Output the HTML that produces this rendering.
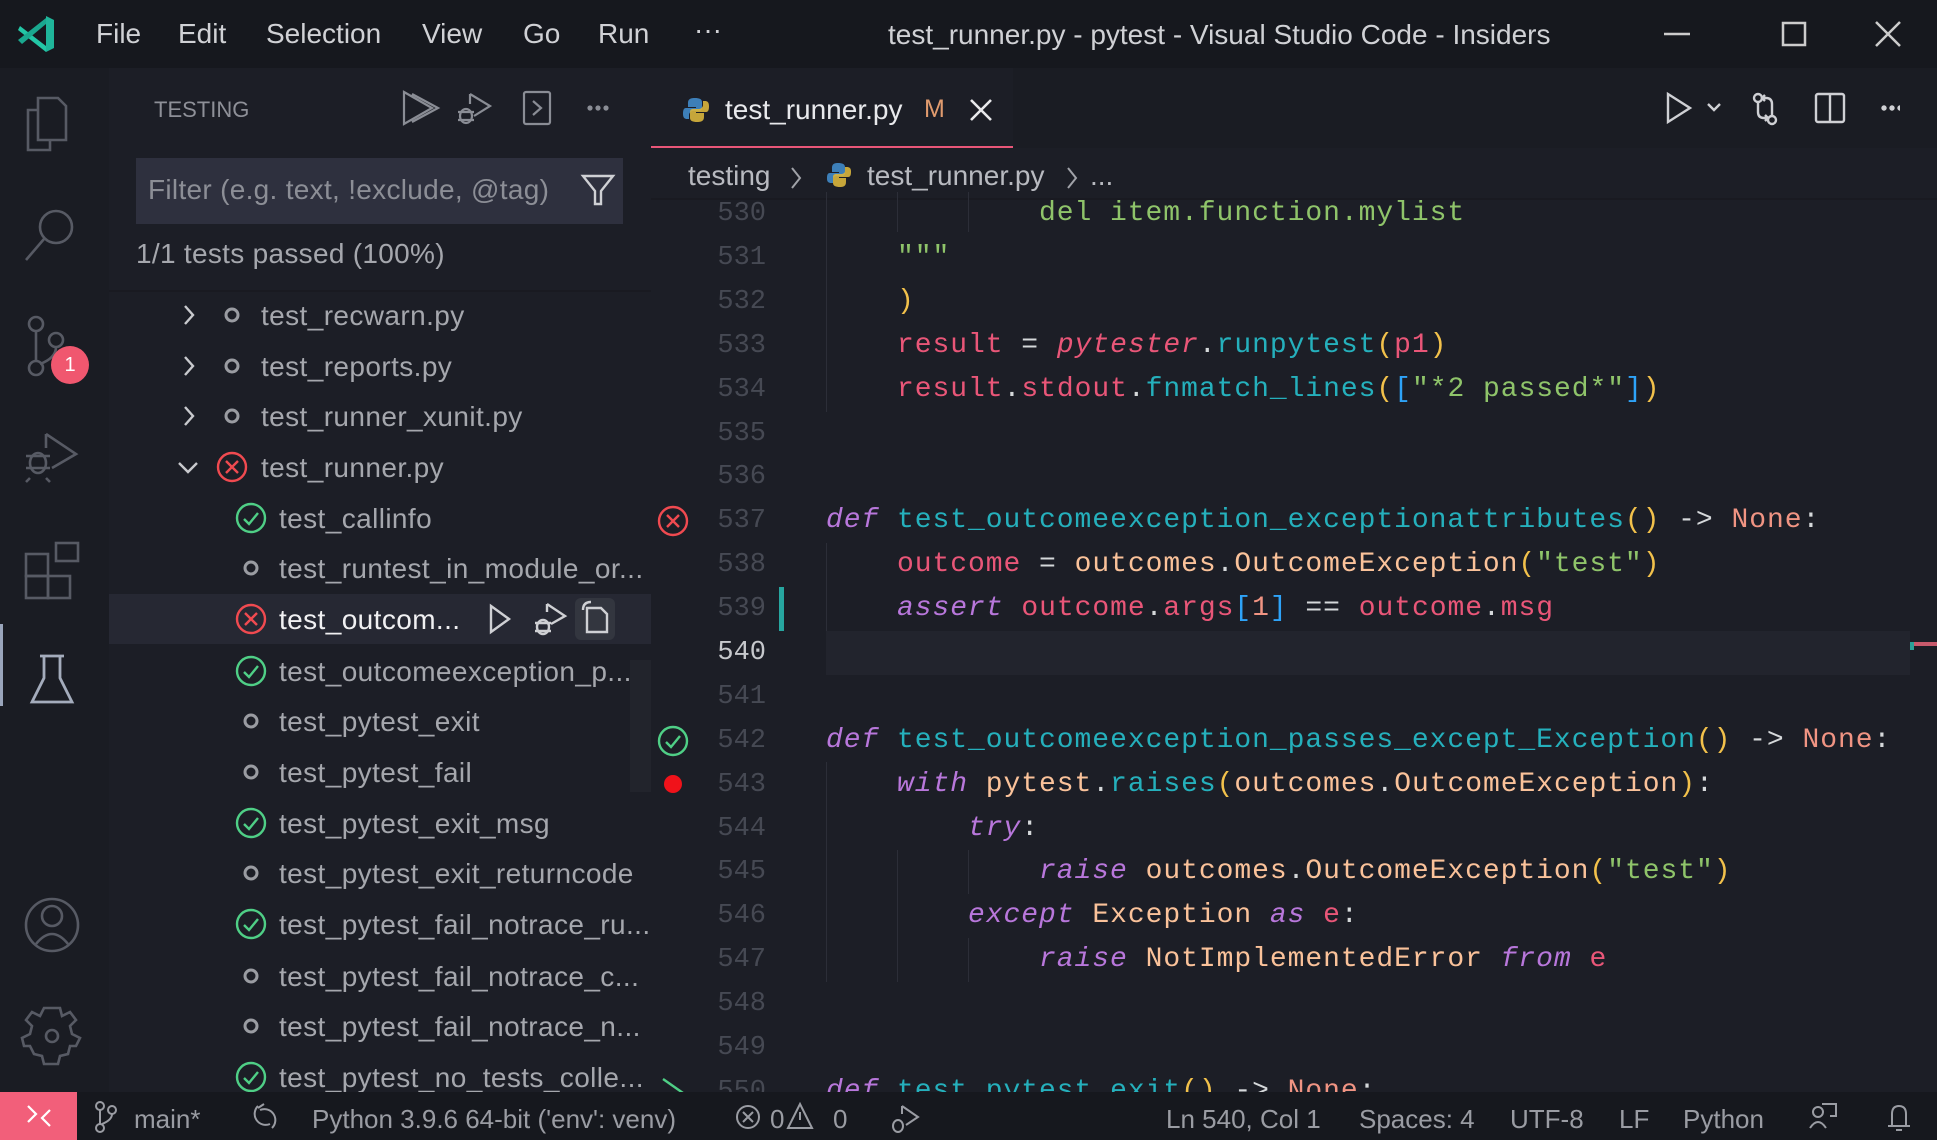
<!DOCTYPE html>
<html><head><meta charset="utf-8"><style>
*{margin:0;padding:0;box-sizing:border-box}
body{width:1937px;height:1140px;background:#1c1e26;overflow:hidden;position:relative;font-family:"Liberation Sans",sans-serif;}
.a{position:absolute}
.ui{font-family:"Liberation Sans",sans-serif;white-space:nowrap}
.code{position:absolute;left:826px;font-family:"Liberation Mono",monospace;font-size:28px;letter-spacing:0.95px;white-space:pre;color:#d5d8da;line-height:44px;height:44px}
.ln{position:absolute;left:686px;width:80px;text-align:right;font-family:"Liberation Mono",monospace;font-size:27px;color:#464953;line-height:44px}
.k{color:#b877db;font-style:italic}.f{color:#25b0bc}.v{color:#e95678}.p{color:#f2c14b}.s{color:#8fc46a}.n{color:#f09483}.t{color:#fac29a}.b{color:#2ea3f8}.vi{color:#e95678;font-style:italic}
.row{position:absolute;left:109px;width:542px;height:51px;font-size:28px;letter-spacing:0.4px;color:#a5a7ad;line-height:51px;white-space:nowrap}
.m{position:absolute;top:18px;font-size:28px;color:#d0d1d5}
</style></head><body>
<!-- title bar -->
<div class="a" style="left:0;top:0;width:1937px;height:68px;background:#16181e"></div>
<svg class="a" style="left:16px;top:14px" width="42" height="40" viewBox="0 0 42 40"><path d="M30 2 L38 6 V34 L30 38 Z" fill="#1fb59a"/><path d="M4 12 L30 32 L30 38 L2 16 Z" fill="#23c7a6"/><path d="M2 26 L30 4 L30 10 L6 30Z" fill="#1aa88f"/></svg>
<div class="a ui m" style="left:96px">File</div>
<div class="a ui m" style="left:178px">Edit</div>
<div class="a ui m" style="left:266px">Selection</div>
<div class="a ui m" style="left:422px">View</div>
<div class="a ui m" style="left:523px">Go</div>
<div class="a ui m" style="left:598px">Run</div>
<div class="a ui m" style="left:694px;top:14px">···</div>
<div class="a ui" style="top:19px;left:888px;font-size:28px;color:#d0d1d5">test_runner.py - pytest - Visual Studio Code - Insiders</div>
<svg class="a" style="left:1660px;top:20px" width="250" height="30"><line x1="4" y1="14" x2="30" y2="14" stroke="#ccc" stroke-width="2.5"/><rect x="123" y="3" width="22" height="22" fill="none" stroke="#ccc" stroke-width="2.5"/><path d="M216 2 L240 26 M240 2 L216 26" stroke="#ccc" stroke-width="2.5"/></svg>

<!-- activity bar -->
<div class="a" style="left:0;top:68px;width:109px;height:1024px;background:#1a1c23"></div>
<svg class="a" style="left:0;top:68px" width="109" height="1024" fill="none" stroke="#575a64" stroke-width="2.6">
<path d="M38 30 H58 L66 38 V72 H38 Z M38 42 H28 V82 H50 V72"/>
<circle cx="56" cy="159" r="16"/><path d="M44 171 L26 192"/>
<circle cx="36" cy="256" r="7"/><circle cx="36" cy="300" r="7"/><circle cx="56" cy="272" r="7"/><path d="M36 263 V293 M56 279 Q56 290 40 296"/>
<path d="M46 366 L76 386 L52 400 M46 366 V380"/><ellipse cx="38" cy="395" rx="8" ry="10"/><path d="M26 388 H50 M26 400 H50 M30 410 L26 414 M46 410 L50 414"/>
<rect x="26" y="486" width="22" height="22"/><rect x="26" y="508" width="22" height="22"/><rect x="48" y="508" width="22" height="22"/><rect x="56" y="475" width="22" height="18"/>
<circle cx="52" cy="857" r="26"/><circle cx="52" cy="848" r="10"/><path d="M36 876 Q52 856 68 876"/>
<path d="M44 940 L60 940 L62 948 L70 944 L76 952 L70 958 L72 966 L80 970 L76 978 L70 978 L68 986 L60 988 L58 996 L44 996 L42 988 L34 986 L30 978 L24 978 L22 970 L30 966 L32 958 L26 952 L32 944 L40 948 Z"/><circle cx="52" cy="968" r="6"/>
</svg>
<div class="a" style="left:0;top:624px;width:3px;height:82px;background:#9aa5bb"></div>
<svg class="a" style="left:0;top:640px" width="109" height="70" fill="none" stroke="#a4acbc" stroke-width="2.8"><path d="M40 16 H64 M44 16 V38 L32 62 H72 L60 38 V16"/></svg>
<div class="a" style="left:51px;top:346px;width:38px;height:38px;border-radius:50%;background:#f0576f;color:#fff;font-size:20px;text-align:center;line-height:38px">1</div>

<!-- sidebar -->
<div class="a" style="left:109px;top:68px;width:542px;height:1024px;background:#1c1e26"></div>
<div class="a ui" style="left:154px;top:97px;font-size:22px;color:#8e9098">TESTING</div>
<svg class="a" style="left:398px;top:88px" width="230" height="40" fill="none" stroke="#8a8d95" stroke-width="2.2">
<path d="M6 4 L34 20 L6 36 Z M14 6 L40 20 L14 34"/>
<path d="M72 6 L92 18 L76 28 M72 6 V16"/><ellipse cx="68" cy="28" rx="6" ry="7"/><path d="M60 24 H76 M60 32 H76"/>
<rect x="126" y="4" width="26" height="32" rx="2"/><path d="M135 13 L143 20 L135 27"/>
<circle cx="192" cy="20" r="1.5" fill="#8a8d95"/><circle cx="200" cy="20" r="1.5" fill="#8a8d95"/><circle cx="208" cy="20" r="1.5" fill="#8a8d95"/>
</svg>
<div class="a" style="left:136px;top:158px;width:487px;height:66px;background:#2e303e"></div>
<div class="a ui" style="left:148px;top:174px;font-size:28px;letter-spacing:0.3px;color:#8c8e96">Filter (e.g. text, !exclude, @tag)</div>
<svg class="a" style="left:580px;top:172px" width="36" height="36" fill="none" stroke="#cfd0d4" stroke-width="2.4"><path d="M3 4 H33 L21 19 V32 H15 V19 Z"/></svg>
<div class="a ui" style="left:136px;top:238px;font-size:28px;letter-spacing:0.3px;color:#a5a7ad">1/1 tests passed (100%)</div>
<div class="a" style="left:109px;top:290px;width:542px;height:2px;background:#191a21"></div>
<div class="a" style="left:109px;top:594px;width:542px;height:50px;background:#262833"></div>
<div class="a" style="left:630px;top:660px;width:21px;height:132px;background:#22242c"></div>

<svg class="a" style="left:109px;top:290px" width="542" height="802" fill="none" stroke-width="2.4">
<g stroke="#c8c9cd"><path d="M76 16 L84 25 L76 34"/><path d="M76 67 L84 76 L76 85"/><path d="M76 117 L84 126 L76 135"/><path d="M70 173 L79 182 L88 173"/></g>
<g stroke="#9a9ca2" stroke-width="3"><circle cx="123" cy="25" r="6"/><circle cx="123" cy="76" r="6"/><circle cx="123" cy="126" r="6"/>
<circle cx="142" cy="278" r="6"/><circle cx="142" cy="431" r="6"/><circle cx="142" cy="482" r="6"/><circle cx="142" cy="583" r="6"/><circle cx="142" cy="686" r="6"/><circle cx="142" cy="736" r="6"/></g>
<g stroke="#f04a50"><circle cx="123" cy="177" r="14"/><path d="M117 171 L129 183 M129 171 L117 183"/><circle cx="142" cy="329" r="14"/><path d="M136 323 L148 335 M148 323 L136 335"/></g>
<g stroke="#4fcf86"><circle cx="142" cy="228" r="14"/><path d="M135 229 L140 234 L149 223"/><circle cx="142" cy="381" r="14"/><path d="M135 382 L140 387 L149 376"/><circle cx="142" cy="533" r="14"/><path d="M135 534 L140 539 L149 528"/><circle cx="142" cy="634" r="14"/><path d="M135 635 L140 640 L149 629"/><circle cx="142" cy="787" r="14"/><path d="M135 788 L140 793 L149 782"/></g>
<g stroke="#cfd0d4"><path d="M382 316 L400 329 L382 342 Z"/><path d="M438 314 L456 326 L442 334 M438 314 V322"/><ellipse cx="434" cy="337" rx="6" ry="7"/><path d="M426 333 H442 M426 341 H442"/></g>
<rect x="466" y="308" width="40" height="42" rx="6" fill="#33363f" stroke="none"/>
<g stroke="#cfd0d4"><path d="M478 318 H492 L498 324 V342 H478 Z M474 320 Q474 312 482 312"/></g>
</svg>
<div class="row" style="top:290px;padding-left:152px">test_recwarn.py</div>
<div class="row" style="top:341px;padding-left:152px">test_reports.py</div>
<div class="row" style="top:391px;padding-left:152px">test_runner_xunit.py</div>
<div class="row" style="top:442px;padding-left:152px">test_runner.py</div>
<div class="row" style="top:493px;padding-left:170px">test_callinfo</div>
<div class="row" style="top:543px;padding-left:170px">test_runtest_in_module_or...</div>
<div class="row" style="top:594px;padding-left:170px;color:#f0f0f2">test_outcom...</div>
<div class="row" style="top:646px;padding-left:170px">test_outcomeexception_p...</div>
<div class="row" style="top:696px;padding-left:170px">test_pytest_exit</div>
<div class="row" style="top:747px;padding-left:170px">test_pytest_fail</div>
<div class="row" style="top:798px;padding-left:170px">test_pytest_exit_msg</div>
<div class="row" style="top:848px;padding-left:170px">test_pytest_exit_returncode</div>
<div class="row" style="top:899px;padding-left:170px">test_pytest_fail_notrace_ru...</div>
<div class="row" style="top:951px;padding-left:170px">test_pytest_fail_notrace_c...</div>
<div class="row" style="top:1001px;padding-left:170px">test_pytest_fail_notrace_n...</div>
<div class="row" style="top:1052px;padding-left:170px">test_pytest_no_tests_colle...</div>

<!-- editor tabs -->
<div class="a" style="left:651px;top:68px;width:1286px;height:80px;background:#1a1c23"></div>
<div class="a" style="left:651px;top:68px;width:362px;height:80px;background:#1c1e26;border-bottom:2px solid #e95678"></div>
<svg class="a" style="left:682px;top:96px" width="28" height="28"><path d="M13 2 C6 2 6 5 6 8 V11 H14 V12 H4 C1 12 1 16 1 18 C1 22 3 23 5 23 H7 V19 C7 17 9 15 11 15 H17 C19 15 20 14 20 12 V6 C20 3 17 2 13 2Z" fill="#3d7fb8"/><path d="M15 26 C22 26 22 23 22 20 V17 H14 V16 H24 C27 16 27 12 27 10 C27 6 25 5 23 5 H21 V9 C21 11 19 13 17 13 H11 C9 13 8 14 8 16 V22 C8 25 11 26 15 26Z" fill="#d9b53d" opacity=".9"/></svg>
<div class="a ui" style="left:725px;top:94px;font-size:28px;color:#e8e9ec">test_runner.py</div>
<div class="a ui" style="left:924px;top:95px;font-size:25px;color:#e09b6e">M</div>
<svg class="a" style="left:968px;top:97px" width="26" height="26"><path d="M3 3 L23 23 M23 3 L3 23" stroke="#e8e9ec" stroke-width="2.6"/></svg>
<svg class="a" style="left:1660px;top:88px" width="240" height="40" fill="none" stroke="#cfd0d4" stroke-width="2.4">
<path d="M8 6 L30 20 L8 34 Z"/><path d="M48 16 L54 22 L60 16"/>
<circle cx="98" cy="10" r="4"/><circle cx="112" cy="32" r="4"/><path d="M98 14 V24 Q98 30 104 30 H108 M105 27 L108 30 L105 33 M112 28 V16 Q112 10 106 10 H102 M105 7 L102 10 L105 13"/>
<rect x="156" y="6" width="28" height="28" rx="2"/><path d="M170 6 V34"/>
<circle cx="224" cy="20" r="1.5" fill="#cfd0d4"/><circle cx="232" cy="20" r="1.5" fill="#cfd0d4"/><circle cx="240" cy="20" r="1.5" fill="#cfd0d4"/>
</svg>
<!-- breadcrumb -->
<div class="a ui" style="left:688px;top:160px;font-size:28px;color:#b8bac0">testing</div>
<svg class="a" style="left:788px;top:164px" width="16" height="28" fill="none" stroke="#a0a2a8" stroke-width="2"><path d="M4 4 L12 14 L4 24"/></svg>
<svg class="a" style="left:826px;top:162px" width="26" height="26"><path d="M12 1 C6 1 6 4 6 7 V10 H13 V11 H4 C1 11 1 14 1 17 C1 20 3 21 5 21 H7 V17 C7 15 9 14 11 14 H16 C18 14 19 13 19 11 V5 C19 2 16 1 12 1Z" fill="#3d7fb8"/><path d="M14 25 C20 25 20 22 20 19 V16 H13 V15 H22 C25 15 25 12 25 9 C25 6 23 5 21 5 H19 V9 C19 11 17 12 15 12 H10 C8 12 7 13 7 15 V21 C7 24 10 25 14 25Z" fill="#d9b53d" opacity=".9"/></svg>
<div class="a ui" style="left:867px;top:160px;font-size:28px;color:#b8bac0">test_runner.py</div>
<svg class="a" style="left:1064px;top:164px" width="16" height="28" fill="none" stroke="#a0a2a8" stroke-width="2"><path d="M4 4 L12 14 L4 24"/></svg>
<div class="a ui" style="left:1090px;top:160px;font-size:28px;color:#b8bac0">...</div>
<div class="a" style="left:651px;top:198px;width:1286px;height:2px;background:#191a21"></div>

<!-- current line -->
<div class="a" style="left:826px;top:631px;width:1084px;height:44px;background:#22242d"></div>
<div class="a" style="left:1910px;top:642px;width:27px;height:4px;background:#c85a6c"></div>
<div class="a" style="left:1910px;top:642px;width:4px;height:8px;background:#2aa198"></div>
<!-- gutter marks -->
<div class="a" style="left:779px;top:587px;width:5px;height:44px;background:#27a6a0"></div>
<svg class="a" style="left:655px;top:497px" width="40" height="600" fill="none" stroke-width="2.4">
<circle cx="18" cy="24" r="14" stroke="#f04a50"/><path d="M12 18 L24 30 M24 18 L12 30" stroke="#f04a50"/>
<circle cx="18" cy="244" r="14" stroke="#4fcf86"/><path d="M11 245 L16 250 L25 239" stroke="#4fcf86"/>
<circle cx="18" cy="287" r="9" fill="#f0121a" stroke="none"/>
<path d="M8 582 L28 596" stroke="#4fcf86"/>
</svg>
<!-- indent guides -->
<div class="a" style="left:826px;top:192px;width:1px;height:220px;background:#2c2e38"></div>
<div class="a" style="left:897px;top:192px;width:1px;height:40px;background:#2c2e38"></div>
<div class="a" style="left:968px;top:192px;width:1px;height:40px;background:#2c2e38"></div>
<div class="a" style="left:826px;top:543px;width:1px;height:88px;background:#2c2e38"></div>
<div class="a" style="left:826px;top:762px;width:1px;height:220px;background:#2c2e38"></div>
<div class="a" style="left:897px;top:850px;width:1px;height:132px;background:#2c2e38"></div>
<div class="a" style="left:968px;top:850px;width:1px;height:44px;background:#2c2e38"></div>
<div class="a" style="left:968px;top:938px;width:1px;height:44px;background:#2c2e38"></div>

<!-- line numbers & code -->
<div class="ln" style="top:192px">530</div><div class="code" style="top:192px"><span class="s">            del item.function.mylist</span></div>
<div class="ln" style="top:236px">531</div><div class="code" style="top:236px"><span class="s">    """</span></div>
<div class="ln" style="top:280px">532</div><div class="code" style="top:280px">    <span class="p">)</span></div>
<div class="ln" style="top:324px">533</div><div class="code" style="top:324px">    <span class="v">result</span> = <span class="vi">pytester</span>.<span class="f">runpytest</span><span class="p">(</span><span class="v">p1</span><span class="p">)</span></div>
<div class="ln" style="top:368px">534</div><div class="code" style="top:368px">    <span class="v">result</span>.<span class="v">stdout</span>.<span class="f">fnmatch_lines</span><span class="p">(</span><span class="b">[</span><span class="s">"*2 passed*"</span><span class="b">]</span><span class="p">)</span></div>
<div class="ln" style="top:412px">535</div>
<div class="ln" style="top:455px">536</div>
<div class="ln" style="top:499px">537</div><div class="code" style="top:499px"><span class="k">def</span> <span class="f">test_outcomeexception_exceptionattributes</span><span class="p">()</span> -&gt; <span class="n">None</span>:</div>
<div class="ln" style="top:543px">538</div><div class="code" style="top:543px">    <span class="v">outcome</span> = <span class="t">outcomes</span>.<span class="t">OutcomeException</span><span class="p">(</span><span class="s">"test"</span><span class="p">)</span></div>
<div class="ln" style="top:587px">539</div><div class="code" style="top:587px">    <span class="k">assert</span> <span class="v">outcome</span>.<span class="v">args</span><span class="b">[</span><span class="n">1</span><span class="b">]</span> == <span class="v">outcome</span>.<span class="v">msg</span></div>
<div class="ln" style="top:631px;color:#c6c8cc">540</div>
<div class="ln" style="top:675px">541</div>
<div class="ln" style="top:719px">542</div><div class="code" style="top:719px"><span class="k">def</span> <span class="f">test_outcomeexception_passes_except_Exception</span><span class="p">()</span> -&gt; <span class="n">None</span>:</div>
<div class="ln" style="top:763px">543</div><div class="code" style="top:763px">    <span class="k">with</span> <span class="t">pytest</span>.<span class="f">raises</span><span class="p">(</span><span class="t">outcomes</span>.<span class="t">OutcomeException</span><span class="p">)</span>:</div>
<div class="ln" style="top:807px">544</div><div class="code" style="top:807px">        <span class="k">try</span>:</div>
<div class="ln" style="top:850px">545</div><div class="code" style="top:850px">            <span class="k">raise</span> <span class="t">outcomes</span>.<span class="t">OutcomeException</span><span class="p">(</span><span class="s">"test"</span><span class="p">)</span></div>
<div class="ln" style="top:894px">546</div><div class="code" style="top:894px">        <span class="k">except</span> <span class="t">Exception</span> <span class="k">as</span> <span class="v">e</span>:</div>
<div class="ln" style="top:938px">547</div><div class="code" style="top:938px">            <span class="k">raise</span> <span class="t">NotImplementedError</span> <span class="k">from</span> <span class="v">e</span></div>
<div class="ln" style="top:982px">548</div>
<div class="ln" style="top:1026px">549</div>
<div class="ln" style="top:1070px">550</div><div class="code" style="top:1070px"><span class="k">def</span> <span class="f">test_pytest_exit</span><span class="p">()</span> -&gt; <span class="n">None</span>:</div>

<!-- status bar -->
<div class="a" style="left:0;top:1092px;width:1937px;height:48px;background:#16181e"></div>
<div class="a" style="left:0;top:1092px;width:77px;height:48px;background:#f25f7a"></div>
<svg class="a" style="left:22px;top:1102px" width="34" height="28" fill="none" stroke="#fff" stroke-width="2.2"><path d="M6 4 L14 12 L6 20 M28 8 L20 16 L28 24"/></svg>
<svg class="a" style="left:92px;top:1100px" width="900" height="34" fill="none" stroke="#9a9ca3" stroke-width="2">
<circle cx="8" cy="6" r="4"/><circle cx="8" cy="28" r="4"/><circle cx="20" cy="10" r="4"/><path d="M8 10 V24 M20 14 Q20 20 10 24"/>
<path d="M168 10 A11 11 0 0 1 180 28 M166 8 L172 4 M178 24 A11 11 0 0 1 166 6"/>
<circle cx="656" cy="17" r="11"/><path d="M651 12 L661 22 M661 12 L651 22"/>
<path d="M708 4 L720 28 H696 Z M708 12 V20"/>
<path d="M810 6 L826 17 L814 25 M810 6 V14"/><ellipse cx="806" cy="26" rx="5" ry="6"/>
</svg>
<div class="a ui" style="left:134px;top:1104px;font-size:26px;color:#9a9ca3">main*</div>
<div class="a ui" style="left:312px;top:1104px;font-size:26px;color:#9a9ca3">Python 3.9.6 64-bit ('env': venv)</div>
<div class="a ui" style="left:770px;top:1104px;font-size:26px;color:#9a9ca3">0</div>
<div class="a ui" style="left:833px;top:1104px;font-size:26px;color:#9a9ca3">0</div>
<div class="a ui" style="left:1166px;top:1104px;font-size:26px;color:#9a9ca3">Ln 540, Col 1</div>
<div class="a ui" style="left:1359px;top:1104px;font-size:26px;color:#9a9ca3">Spaces: 4</div>
<div class="a ui" style="left:1510px;top:1104px;font-size:26px;color:#9a9ca3">UTF-8</div>
<div class="a ui" style="left:1619px;top:1104px;font-size:26px;color:#9a9ca3">LF</div>
<div class="a ui" style="left:1683px;top:1104px;font-size:26px;color:#9a9ca3">Python</div>
<svg class="a" style="left:1808px;top:1100px" width="120" height="34" fill="none" stroke="#9a9ca3" stroke-width="2"><circle cx="10" cy="12" r="5"/><path d="M2 28 Q10 16 18 28 M14 4 H28 V16 H22"/><path d="M80 26 H102 M84 26 V14 Q84 6 91 6 Q98 6 98 14 V26 M88 30 H94"/></svg>
</body></html>
